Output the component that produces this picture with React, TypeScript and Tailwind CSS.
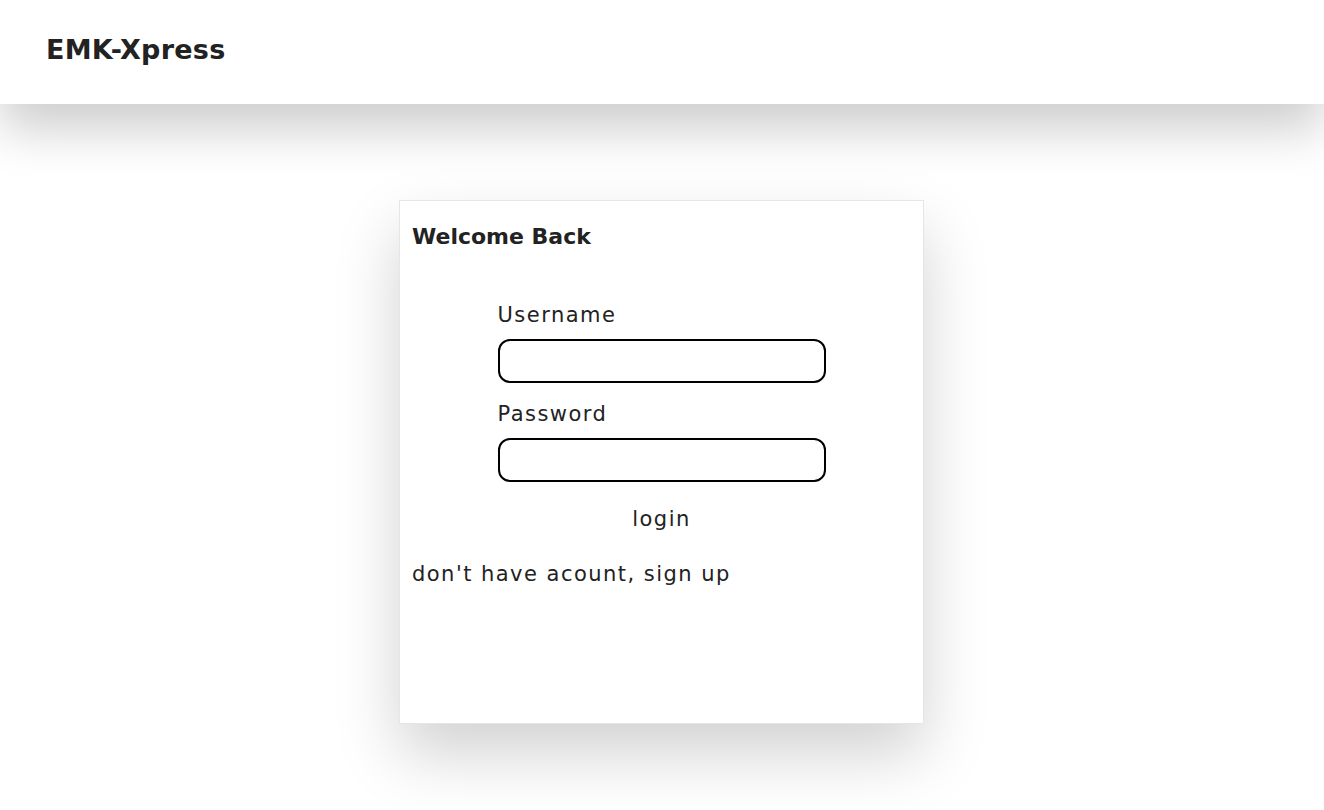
export default function App() {
  return (
    <div className="min-h-[810px] bg-white text-[#222] font-['DejaVu_Sans',sans-serif]">
      {/* top bar */}
      <header className="relative h-[104px] bg-white px-[46px] flex items-center shadow-[0_25px_50px_rgba(0,0,0,0.2)]">
        <h1 className="text-[27px] font-semibold tracking-[0.01em] leading-none pb-[6px]">EMK-Xpress</h1>
      </header>

      {/* login card */}
      <main className="flex justify-center pt-[96px] pr-[1px]">
        <div className="w-[525px] h-[524px] bg-white border border-[#e6e6e6] p-3 shadow-[0_30px_60px_rgba(0,0,0,0.18)]">
          <h3 className="mt-[9px] text-[22px] font-semibold leading-[30px]">Welcome Back</h3>

          <form className="mt-[47px] flex flex-col items-center" onSubmit={(e) => e.preventDefault()}>
            <div className="w-[328px] text-[21px] tracking-[0.07em]">
              <label className="block leading-[30px] pt-[1px]">Username</label>
              <input
                type="text"
                className="mt-[9px] w-full h-[44px] rounded-xl border-2 border-black px-3 outline-none"
              />
              <label className="mt-[15px] block leading-[30px] pt-[1px]">Password</label>
              <input
                type="password"
                className="mt-[9px] w-full h-[44px] rounded-xl border-2 border-black px-3 outline-none"
              />
            </div>
            <button type="submit" className="mt-[22px] text-[21px] tracking-[0.07em] leading-[30px] bg-transparent">
              login
            </button>
          </form>

          <p className="mt-[25px] text-[21px] tracking-[0.07em] leading-[30px]">don't have acount, sign up</p>
        </div>
      </main>
    </div>
  )
}
